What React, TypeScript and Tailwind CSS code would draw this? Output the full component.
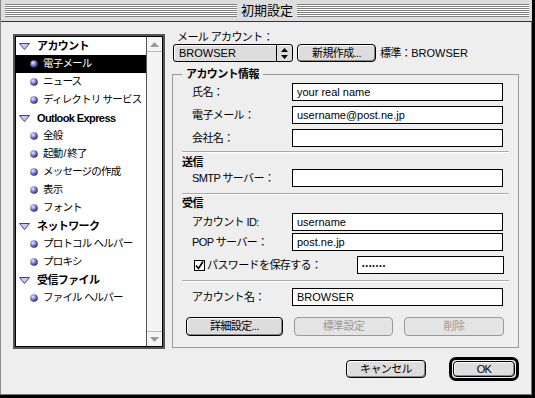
import React from 'react';

const tree = [
  { head: 'アカウント', items: ['電子メール', 'ニュース', 'ディレクトリ サービス'] },
  { head: 'Outlook Express', items: ['全般', '起動/終了', 'メッセージの作成', '表示', 'フォント'] },
  { head: 'ネットワーク', items: ['プロトコル ヘルパー', 'プロキシ'] },
  { head: '受信ファイル', items: ['ファイル ヘルパー'] },
];

function Bullet() {
  return (
    <svg width="8" height="8" viewBox="0 0 8 8" className="shrink-0">
      <defs>
        <radialGradient id="ball" cx="38%" cy="35%" r="70%">
          <stop offset="0" stopColor="#f0f0ff" />
          <stop offset="0.45" stopColor="#8080e0" />
          <stop offset="1" stopColor="#1c1c5c" />
        </radialGradient>
      </defs>
      <circle cx="4" cy="4" r="3.8" fill="url(#ball)" />
    </svg>
  );
}

function Disclosure() {
  return (
    <svg width="11" height="7" viewBox="0 0 11 7" className="shrink-0">
      <path d="M0.5 0.5 H10.5 L5.5 6.5 Z" fill="#c8c8f8" stroke="#404090" strokeWidth="1" />
    </svg>
  );
}

function Field({ value, className = 'w-[211px]' }: { value?: string; className?: string }) {
  return (
    <div className={`${className} h-[18px] bg-white border border-black flex items-center pl-[4px] text-[11px] tracking-normal leading-none text-black whitespace-nowrap`}>
      {value}
    </div>
  );
}

function Row({ label, value }: { label: string; value?: string }) {
  return (
    <div className="flex items-center h-[18px]">
      <div className="w-[119px] pl-[19px] whitespace-nowrap">{label}</div>
      <Field value={value} />
    </div>
  );
}

function Sep() {
  return <div className="mx-[9px] h-px bg-[#aaa] border-b border-white box-content" />;
}

function Btn({ children, className, disabled }: { children: React.ReactNode; className: string; disabled?: boolean }) {
  return (
    <div
      className={`${className} rounded-[4px] border flex items-center justify-center whitespace-nowrap ${
        disabled
          ? 'border-[#999] text-[#999] bg-[#e4e4e4]'
          : 'border-black text-black bg-[#ddd] shadow-[inset_1px_1px_0_#fff,inset_-1px_-1px_0_#888]'
      }`}
    >
      {children}
    </div>
  );
}

function Stripes() {
  return (
    <div className="flex-1 flex flex-col">
      {[0, 1, 2, 3, 4, 5, 6].map((i) => (
        <React.Fragment key={i}>
          <div className="h-px bg-[#808080]" />
          {i < 6 && <div className="h-px bg-white" />}
        </React.Fragment>
      ))}
    </div>
  );
}

function ItemLabel({ text }: { text: string }) {
  // keep the slash readable with the tight tracking
  const parts = text.split('/');
  if (parts.length === 1) return <span>{text}</span>;
  return (
    <span>
      {parts[0]}
      <span className="tracking-normal px-[1px]">/</span>
      {parts[1]}
    </span>
  );
}

export default function App() {
  return (
    <div className="w-[535px] h-[398px] bg-black font-['Liberation_Sans','Noto_Sans_CJK_JP',sans-serif] text-[11px] tracking-[-0.6px] text-black">
      <div className="w-[532px] h-[395px] bg-[#eee] border-l border-[#888] flex flex-col">
        {/* title bar */}
        <div className="h-[22px] shrink-0 bg-[#ddd] border-b border-[#333] flex items-center pl-[4px] pr-[3px]">
          <Stripes />
          <div className="px-[4px] text-[13px] tracking-normal leading-none">初期設定</div>
          <Stripes />
        </div>

        {/* body */}
        <div className="flex-1 flex pl-[12px] pt-[8px] border-r border-b border-[#777]">
          {/* tree list */}
          <div className="mt-[4px] w-[152px] h-[315px] border-2 border-[#555] shrink-0">
            <div className="h-full border border-black flex bg-white">
              <div className="flex-1 flex flex-col overflow-hidden">
                {tree.map((g) => (
                  <React.Fragment key={g.head}>
                    <div className="h-[18px] flex items-center pl-[3px] gap-[7px] font-bold whitespace-nowrap">
                      <Disclosure />
                      <span>{g.head}</span>
                    </div>
                    {g.items.map((it) => (
                      <div
                        key={it}
                        className={`h-[18px] flex items-center pl-[14px] gap-[5px] text-[10.5px] tracking-[-0.8px] whitespace-pre ${
                          it === '電子メール' ? 'bg-black text-white' : ''
                        }`}
                      >
                        <Bullet />
                        <ItemLabel text={it} />
                      </div>
                    ))}
                  </React.Fragment>
                ))}
              </div>
              <div className="w-[16px] border-l border-[#555] bg-[#f4f4f4] flex flex-col justify-between">
                <div className="h-[15px] border-b border-[#bbb] flex items-center justify-center">
                  <svg width="9" height="5" viewBox="0 0 9 5"><path d="M0 5 L4.5 0 L9 5 Z" fill="#999" /></svg>
                </div>
                <div className="h-[15px] border-t border-[#bbb] flex items-center justify-center">
                  <svg width="9" height="5" viewBox="0 0 9 5"><path d="M0 0 L4.5 5 L9 0 Z" fill="#999" /></svg>
                </div>
              </div>
            </div>
          </div>

          {/* right column */}
          <div className="ml-[7px] w-[347px] flex flex-col">
            <div className="h-[14px] pl-[5px] leading-[14px] whitespace-nowrap">メール アカウント：</div>
            <div className="h-[18px] flex items-center whitespace-nowrap">
              <div className="ml-[1px] w-[120px] h-[18px] rounded-[3px] border border-black bg-[#ddd] shadow-[inset_1px_1px_0_#fff] flex">
                <div className="flex-1 pl-[5px] flex items-center tracking-normal">BROWSER</div>
                <div className="w-[16px] border-l border-black flex items-center justify-center">
                  <svg width="7" height="11" viewBox="0 0 7 11">
                    <path d="M0 4 L3.5 0 L7 4 Z M0 7 L3.5 11 L7 7 Z" fill="#000" />
                  </svg>
                </div>
              </div>
              <Btn className="ml-[4px] w-[79px] h-[18px]">新規作成...</Btn>
              <span className="ml-[4px]">標準：<span className="tracking-normal">BROWSER</span></span>
            </div>

            {/* account info group */}
            <div className="relative mt-[12px] h-[274px] border border-[#999] flex flex-col">
              <div className="absolute -top-[8px] left-[9px] px-[4px] bg-[#eee] font-bold leading-[14px] whitespace-nowrap">アカウント情報</div>
              <div className="mt-[8px]"><Row label="氏名：" value="your real name" /></div>
              <div className="mt-[5px]"><Row label="電子メール：" value="username@post.ne.jp" /></div>
              <div className="mt-[5px]"><Row label="会社名：" /></div>
              <div className="mt-[4px]"><Sep /></div>
              <div className="mt-[3px] h-[13px] pl-[9px] font-bold leading-[13px]">送信</div>
              <div><Row label="SMTP サーバー：" /></div>
              <div className="mt-[6px]"><Sep /></div>
              <div className="mt-[2px] h-[13px] pl-[9px] font-bold leading-[13px]">受信</div>
              <div className="mt-[3px]"><Row label="アカウント ID:" value="username" /></div>
              <div className="mt-[2px]"><Row label="POP サーバー：" value="post.ne.jp" /></div>
              <div className="mt-[5px] h-[18px] flex items-center">
                <div className="ml-[21px] w-[11px] h-[11px] border border-black bg-white flex items-center justify-center">
                  <svg width="9" height="9" viewBox="0 0 9 9">
                    <path d="M1 4.5 L3.5 7.5 L8 0.5" fill="none" stroke="#000" strokeWidth="1.6" />
                  </svg>
                </div>
                <span className="ml-[2px] w-[150px] whitespace-nowrap">パスワードを保存する：</span>
                <div className="w-[147px] h-[18px] bg-white border border-black flex items-center pl-[4px] text-[7px] tracking-[1px] leading-none">•••••••</div>
              </div>
              <div className="mt-[6px]"><Sep /></div>
              <div className="mt-[6px]"><Row label="アカウント名：" value="BROWSER" /></div>
              <div className="mt-[11px] flex items-center pl-[13px] gap-[11px]">
                <Btn className="w-[97px] h-[19px]">詳細設定...</Btn>
                <Btn className="w-[99px] h-[19px]" disabled>標準設定</Btn>
                <Btn className="w-[100px] h-[19px]" disabled>削除</Btn>
              </div>
            </div>

            <div className="mt-[9px] h-[24px] flex items-center justify-end">
              <Btn className="w-[80px] h-[18px] mr-[23px]">キャンセル</Btn>
              <div className="w-[70px] h-[24px] border-[3px] border-black rounded-[7px] p-[1px] flex">
                <Btn className="flex-1 h-full">OK</Btn>
              </div>
            </div>
          </div>
        </div>
      </div>
    </div>
  );
}
